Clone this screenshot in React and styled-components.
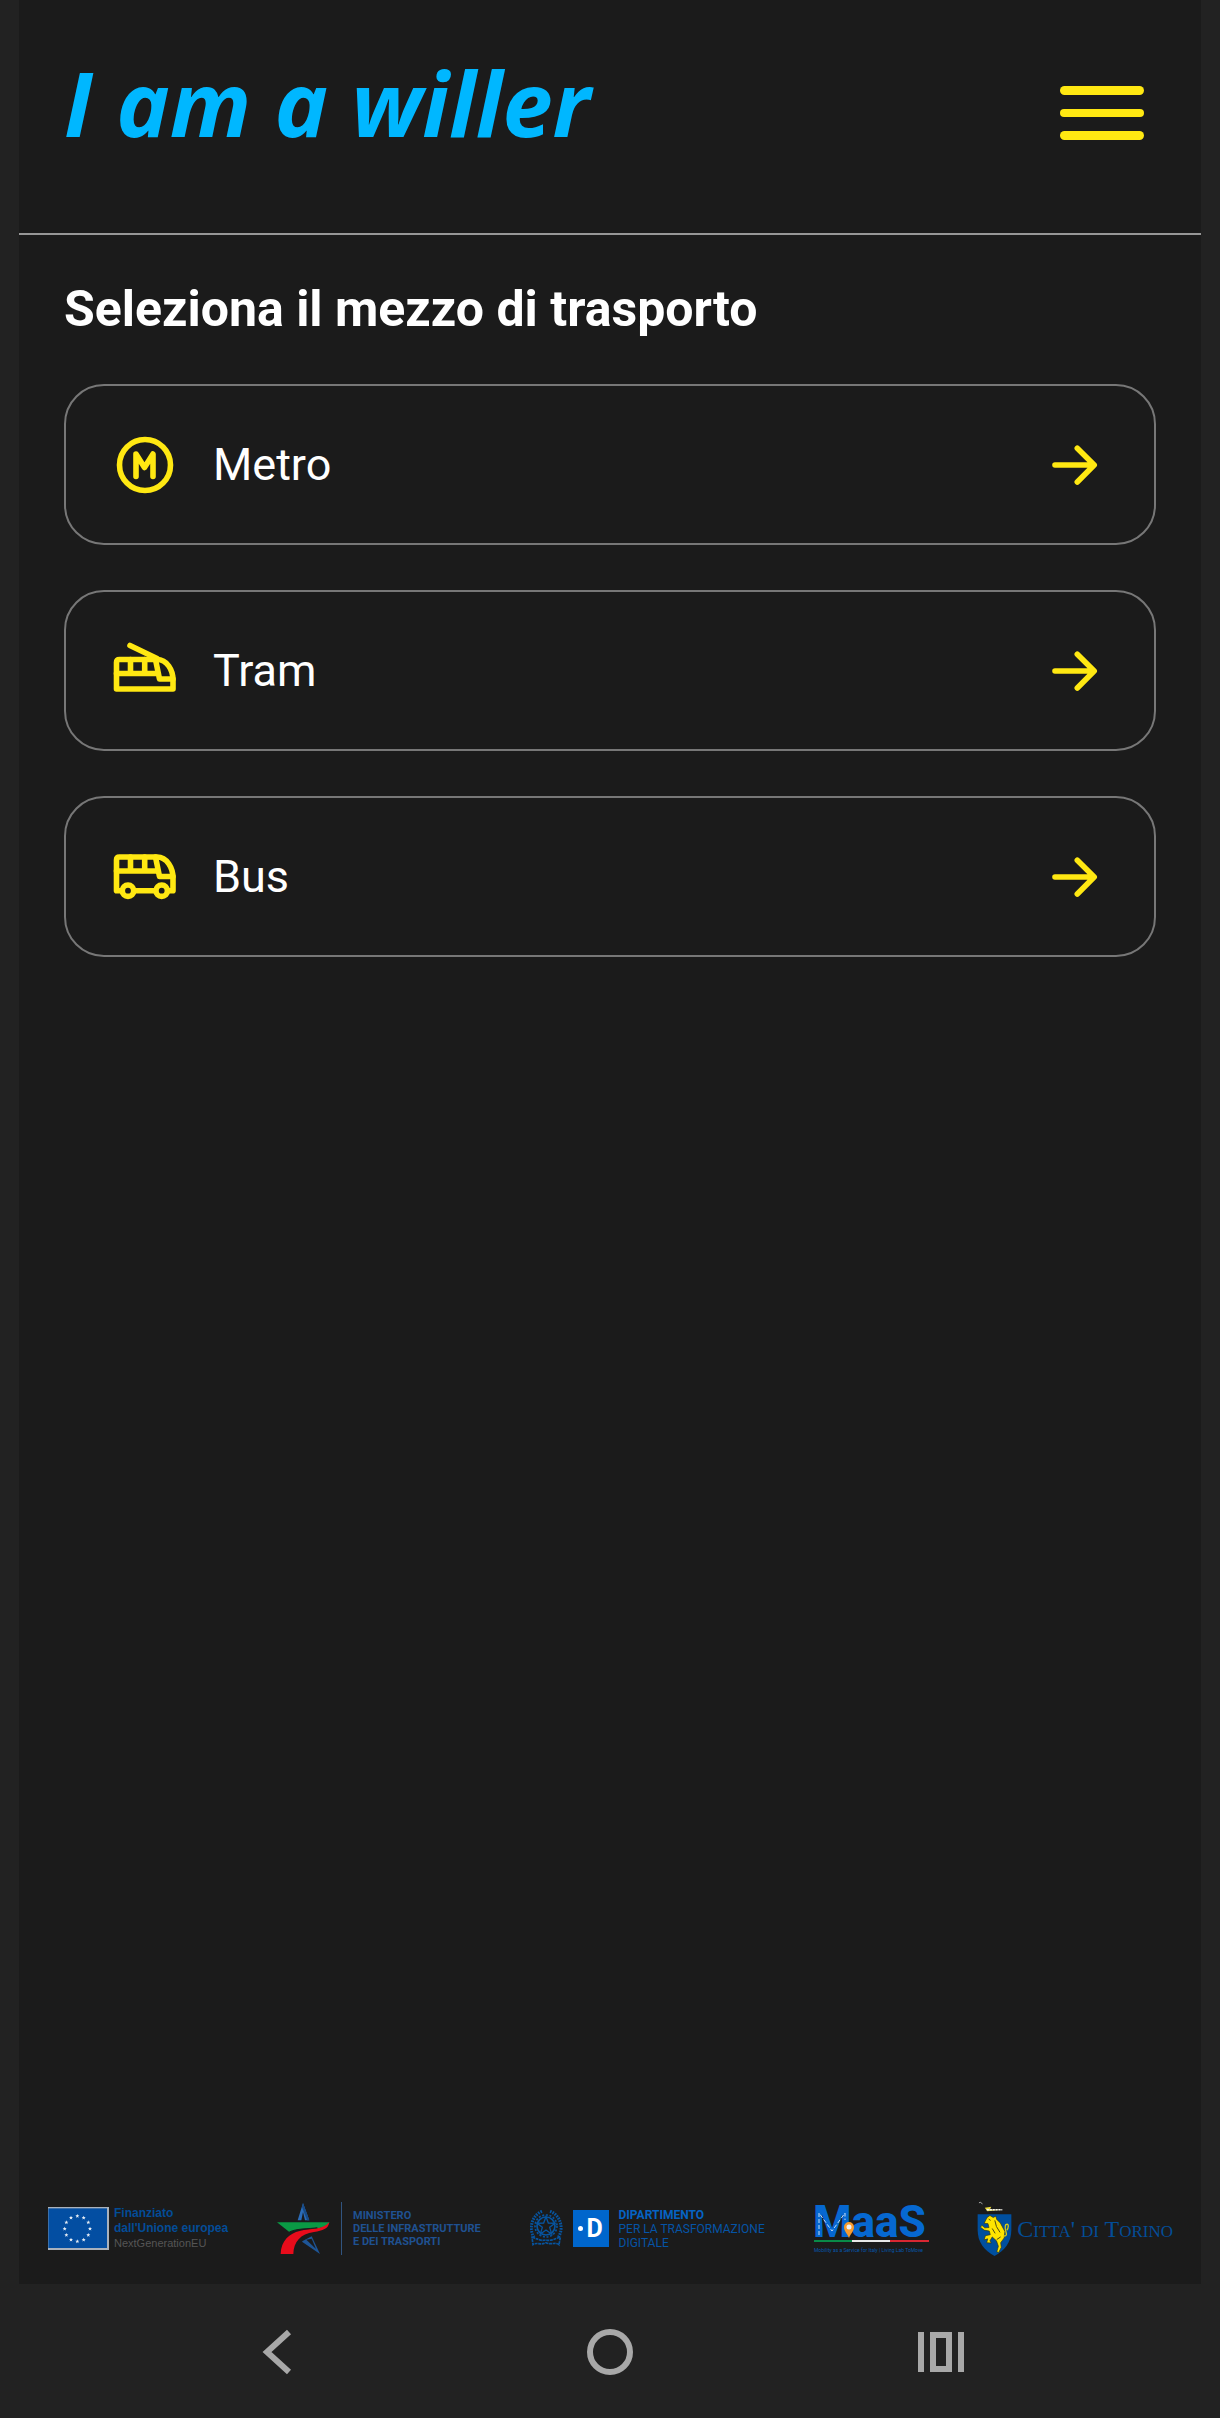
import styled, { createGlobalStyle } from "styled-components";

const MetroIcon = () => (
  <Icon viewBox="0 0 68 68" aria-hidden="true">
    <circle cx="34" cy="34" r="25.5" />
    <path d="M25 45.5V23L33.5 36.5L42 23V45.5" />
  </Icon>
);

const TramIcon = () => (
  <Icon viewBox="0 0 68 68" aria-hidden="true">
    <path d="M19 8.5L46 21.5" />
    <path d="M5.5 52V25.5Q5.5 22.5 8.5 22.5H46C56 22.5 62 33 62 43V52Z" />
    <path d="M5.5 36.5H46M19.5 22.5V36M33.7 22.5V36M44.5 22.5L48.5 42H62" />
  </Icon>
);

const BusIcon = () => (
  <Icon viewBox="0 0 68 68" aria-hidden="true">
    <path d="M10 47.7H5.5V17Q5.5 14 8.5 14H46C56 14 62 25 62 35V47.7H58M24 47.7H43" />
    <path d="M5.5 28H46M19.5 14V28M33.7 14V28M44.5 14L48.5 33.5H62" />
    <circle cx="17" cy="47.7" r="5.7" />
    <circle cx="50.7" cy="47.7" r="5.7" />
  </Icon>
);

const ArrowIcon = () => (
  <Icon viewBox="0 0 68 68" aria-hidden="true">
    <path d="M14 34H53M36.3 17.2L53.2 34L36.3 51" />
  </Icon>
);

const vehicles = [
  { name: "Metro", icon: <MetroIcon /> },
  { name: "Tram", icon: <TramIcon /> },
  { name: "Bus", icon: <BusIcon /> },
];

const euStars = Array.from({ length: 12 }, (_, i) => {
  const angle = (i * Math.PI) / 6;
  return { x: 88 + 38 * Math.sin(angle), y: 65 - 38 * Math.cos(angle) };
});

const EuFlag = () => (
  <svg width="61" height="43" viewBox="0 0 183 129" aria-hidden="true">
    <rect width="183" height="129" fill="#a9b2bd" />
    <rect x="1" y="4" width="176" height="119" fill="#034ea2" />
    {euStars.map(({ x, y }) => (
      <path
        key={`${x}-${y}`}
        transform={`translate(${x} ${y})`}
        fill="#e6edf5"
        d="M0-6L1.7-2H6L2.6 1L4 5.5L0 3L-4 5.5L-2.6 1L-6-2H-1.7Z"
      />
    ))}
  </svg>
);

const MinistryStar = () => (
  <svg width="53" height="52" viewBox="0 0 159 156" aria-hidden="true">
    <path d="M78 0L97 52H84L78 27L73 52H62Z" fill="#2b6cb8" />
    <path d="M78 0L97 52H90L75 12Z" fill="#174a86" />
    <path d="M77 114L104 100L129 153L75 116Z" fill="#1e5596" />
    <path d="M88 110L104 107L117 138Z" fill="#1b1b1b" />
    <path d="M0 58H157C153 69 139 76 116 76C83 77 58 78 37 87Z" fill="#0a9a45" />
    <path
      d="M157 58C154 78 137 83 111 87C70 92 50 118 49 153H11C12 113 38 91 68 84C102 76 136 82 157 58Z"
      fill="#e80c1b"
    />
    <path d="M37 87C58 76 98 78 121 74" fill="none" stroke="#1b1b1b" strokeWidth="3" />
  </svg>
);

const ItalyEmblem = () => (
  <svg width="33" height="37" viewBox="0 0 99 111" fill="none" stroke="#07549f" aria-hidden="true">
    <circle cx="48" cy="48" r="27" strokeWidth="5" />
    <circle cx="48" cy="48" r="33" strokeWidth="5" strokeDasharray="6 5" />
    <path d="M48 20L55 39L75 40L59 52L65 72L48 60L31 72L37 52L21 40L41 39Z" strokeWidth="4" />
    <path d="M36 4C8 14-6 54 12 82M60 4C90 14 103 54 85 82" strokeWidth="9" strokeDasharray="5 3" />
    <path
      d="M6 82C22 85 29 94 47 90C65 94 75 85 91 82L87 104C75 95 67 106 48 98C30 107 22 95 9 104Z"
      strokeWidth="5"
      strokeDasharray="9 2"
    />
  </svg>
);

const MaasLogo = () => (
  <MaasSvg width="115" height="48" viewBox="0 0 115 48" role="img" aria-label="MaaS">
    <MaasWord x="-1" y="32">MaaS</MaasWord>
    <path
      d="M5 30V8L18 26L31 8V15"
      fill="none"
      stroke="#c4ddf5"
      strokeWidth="1"
      strokeDasharray="4 2"
    />
    <path d="M35 33C33 28 30 26 30 22A5 5 0 0 1 40 22C40 26 37 28 35 33Z" fill="#f79b2e" />
    <circle cx="35" cy="22" r="2.5" fill="#f4f4f4" />
    <path d="M0 36H39" stroke="#098a48" strokeWidth="2" />
    <path d="M38 36H77" stroke="#e8e8e8" strokeWidth="2" />
    <path d="M76 36H115" stroke="#d92732" strokeWidth="2" />
    <MaasTag x="0" y="47">
      Mobility as a Service for Italy | Living Lab ToMove
    </MaasTag>
  </MaasSvg>
);

const TorinoCrest = () => (
  <svg width="35" height="57" viewBox="556 30 108 172" aria-hidden="true">
    <path d="M562 37L566 35L573 40" stroke="#aaa" strokeWidth="3" fill="none" />
    <path d="M580 52L600 49L596 57L633 58L588 63Z" fill="#e8d83b" />
    <path d="M586 58H634" stroke="#f3f3ef" strokeWidth="5" strokeDasharray="7 2" />
    <path d="M558 72H662V121C662 158 642 185 610 201C578 185 558 158 558 121Z" fill="#004f9f" />
    <path
      d="M588 81L596 76L606 82L614 78L617 88L628 99L642 125L640 145L629 160L631 174L623 190L617 188L622 171L616 154L603 142L596 154L600 161L586 160L589 148L578 151L582 138L597 135L594 124L578 121L567 112L571 106L580 114L593 113L590 101L578 100L583 90Z"
      fill="#ffe400"
      stroke="#30340b"
      strokeWidth="2"
    />
    <path d="M637 139C659 141 636 119 645 104C657 98 652 118 648 121" fill="none" stroke="#d9cd15" strokeWidth="4" />
    <path d="M592 87L598 91M611 91L616 110L627 128M603 116L612 131M617 150L629 142" fill="none" stroke="#4a4810" strokeWidth="3" />
  </svg>
);

export default function App() {
  return (
    <>
      <GlobalStyle />
      <Page>
        <Screen>
          <Header>
            <Logo href="#">I am a willer</Logo>
            <MenuButton type="button" aria-label="Menu">
              <svg width="84" height="54" viewBox="0 0 84 54" aria-hidden="true">
                <rect width="84" height="9" rx="4.5" />
                <rect y="23" width="84" height="8" rx="4" />
                <rect y="45" width="84" height="9" rx="4.5" />
              </svg>
            </MenuButton>
          </Header>
          <Main>
            <Title>Seleziona il mezzo di trasporto</Title>
            <Options>
              {vehicles.map(({ name, icon }) => (
                <Option key={name} type="button">
                  {icon}
                  <OptionName>{name}</OptionName>
                  <ArrowIcon />
                </Option>
              ))}
            </Options>
          </Main>
          <Sponsors>
            <Sponsor $gap={5}>
              <EuFlag />
              <EuText>
                <b>Finanziato</b>
                <b>dall'Unione europea</b>
                <span>NextGenerationEU</span>
              </EuText>
            </Sponsor>
            <Sponsor $gap={11}>
              <MinistryStar />
              <MinistryText>
                <span>MINISTERO</span>
                <span>DELLE INFRASTRUTTURE</span>
                <span>E DEI TRASPORTI</span>
              </MinistryText>
            </Sponsor>
            <Sponsor $gap={10}>
              <ItalyEmblem />
              <DigitalMark>
                <i />D
              </DigitalMark>
              <DigitalText>
                <b>DIPARTIMENTO</b>
                <span>PER LA TRASFORMAZIONE</span>
                <span>DIGITALE</span>
              </DigitalText>
            </Sponsor>
            <MaasLogo />
            <Sponsor $gap={5}>
              <TorinoCrest />
              <TorinoText>Citta' di Torino</TorinoText>
            </Sponsor>
          </Sponsors>
        </Screen>
        <SystemBar>
          <SystemButton type="button" aria-label="Back">
            <svg width="48" height="48" viewBox="0 0 48 48">
              <path d="M35 4L13 24L35 44" />
            </svg>
          </SystemButton>
          <SystemButton type="button" aria-label="Home">
            <svg width="48" height="48" viewBox="0 0 48 48">
              <circle cx="24" cy="24" r="20" />
            </svg>
          </SystemButton>
          <SystemButton type="button" aria-label="Recent apps">
            <svg width="48" height="48" viewBox="0 0 48 48">
              <path d="M3 4V44M43 4V44M15 7H31V41H15Z" />
            </svg>
          </SystemButton>
        </SystemBar>
      </Page>
    </>
  );
}

const GlobalStyle = createGlobalStyle`
  * {
    box-sizing: border-box;
  }
  body {
    margin: 0;
    background: #222;
    font-family: Roboto, sans-serif;
    color: #fff;
  }
  button {
    border: none;
    background: none;
    padding: 0;
    font: inherit;
    color: inherit;
    cursor: pointer;
  }
  svg {
    display: block;
    flex-shrink: 0;
  }
`;

const Page = styled.div`
  min-height: 100vh;
  display: flex;
  flex-direction: column;
`;

const Screen = styled.div`
  flex: 1;
  display: flex;
  flex-direction: column;
  margin: 0 19px;
  background: #1b1b1b;
`;

const Header = styled.header`
  display: flex;
  justify-content: space-between;
  align-items: flex-start;
  padding: 40px 45px 49px;
  border-bottom: 2px solid #979797;
`;

const Logo = styled.a`
  font-family: "Open Sans", sans-serif;
  font-size: 90px;
  font-style: italic;
  font-weight: 700;
  line-height: 124px;
  color: #00b7ff;
  text-decoration: none;
`;

const MenuButton = styled.button`
  padding: 46px 12px 44px;
  svg {
    fill: #ffe812;
  }
`;

const Main = styled.main`
  flex: 1;
  padding: 45px;
`;

const Title = styled.h1`
  margin: 0 0 46px;
  font-size: 50px;
  font-weight: 700;
  line-height: 58px;
`;

const Options = styled.div`
  display: flex;
  flex-direction: column;
  gap: 45px;
`;

const Option = styled.button`
  display: flex;
  align-items: center;
  gap: 34px;
  height: 161px;
  padding: 0 45px;
  border: 2px solid #777;
  border-radius: 40px;
  text-align: left;
`;

const OptionName = styled.span`
  flex: 1;
  font-size: 45px;
  line-height: 54px;
`;

const Icon = styled.svg`
  width: 68px;
  height: 68px;
  fill: none;
  stroke: #ffe812;
  stroke-width: 5.6px;
  stroke-linecap: round;
  stroke-linejoin: round;
`;

const Sponsors = styled.footer`
  display: flex;
  justify-content: space-between;
  align-items: center;
  padding: 0 28px 27px 29px;
`;

const Sponsor = styled.div`
  display: flex;
  align-items: center;
  gap: ${({ $gap }) => $gap}px;
`;

const SponsorText = styled.div`
  display: flex;
  flex-direction: column;
  white-space: nowrap;
`;

const EuText = styled(SponsorText)`
  font-family: "Liberation Sans", sans-serif;
  font-size: 12px;
  line-height: 15px;
  color: #034c97;
  span {
    font-size: 11px;
    color: #555;
  }
`;

const MinistryText = styled(SponsorText)`
  padding: 7px 0 7px 11px;
  border-left: 1px solid #31547f;
  font-size: 11px;
  font-weight: 700;
  line-height: 13px;
  color: #1f5191;
`;

const DigitalMark = styled.div`
  display: flex;
  align-items: center;
  justify-content: center;
  gap: 3px;
  width: 36px;
  height: 37px;
  background: #0066cc;
  font-size: 25px;
  font-weight: 700;
  i {
    width: 5px;
    height: 5px;
    border-radius: 50%;
    background: #fff;
  }
`;

const DigitalText = styled(SponsorText)`
  font-size: 12px;
  line-height: 14px;
  color: #0554a6;
  b {
    color: #0563c4;
  }
`;

const MaasSvg = styled.svg`
  overflow: visible;
`;

const MaasWord = styled.text`
  font-size: 44px;
  font-weight: 800;
  fill: #0668d1;
`;

const MaasTag = styled.text`
  font-size: 5px;
  fill: #0557ad;
`;

const TorinoText = styled.span`
  font-family: "Liberation Serif", serif;
  font-size: 24px;
  font-variant: small-caps;
  line-height: 30px;
  white-space: nowrap;
  color: #034d97;
`;

const SystemBar = styled.nav`
  display: flex;
  height: 134px;
  padding: 2px 112px 0;
`;

const SystemButton = styled.button`
  flex: 1;
  display: flex;
  align-items: center;
  justify-content: center;
  svg {
    fill: none;
    stroke: #a8a8a8;
    stroke-width: 6px;
  }
`;
